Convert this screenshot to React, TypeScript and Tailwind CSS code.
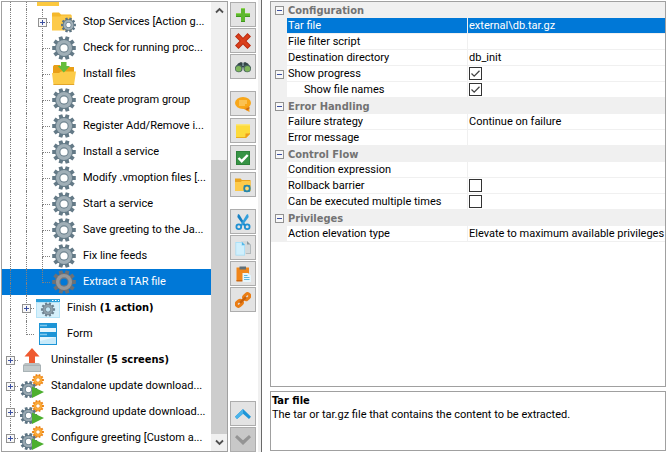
import type { ReactNode } from "react";
import { clsx } from "clsx";

type IconProps = { className?: string };

const TEETH = [18, 54, 90, 126, 162, 198, 234, 270, 306, 342];

function Gear({ cx, cy, scale, dark, light, hole = "#fff" }: {
    cx: number; cy: number; scale: number; dark: string; light: string; hole?: string;
}) {
    return (
        <g transform={`translate(${cx} ${cy}) scale(${scale})`}>
            {TEETH.map((angle) => (
                <path key={angle} d="M-2.1 -7 L-1.9 -11.8 H1.9 L2.1 -7Z" fill={dark} transform={`rotate(${angle})`}/>
            ))}
            <circle r="9" fill={dark}/>
            <circle r="8" fill={light}/>
            <circle r="4.7" fill={dark} fillOpacity="0.8"/>
            <circle r="3.6" fill={hole}/>
        </g>
    );
}

function GearIcon({ selected }: { selected?: boolean }) {
    return (
        <svg viewBox="0 0 24 24" className="size-6 shrink-0">
            {selected
                ? <Gear cx={12} cy={12} scale={1} dark="#6b7177" light="#96989a" hole="#0078d7"/>
                : <Gear cx={12} cy={12} scale={1} dark="#647a87" light="#a0afb7"/>}
        </svg>
    );
}

function FolderIcon() {
    return (
        <svg viewBox="0 0 24 24" className="size-6 shrink-0">
            <path d="M1 4h8l2 2h11v16H1z" fill="#e0a21c"/>
            <path d="M1 9h22v13H1z" fill="#fcc93f"/>
        </svg>
    );
}

function FolderGearIcon() {
    return (
        <svg viewBox="0 0 24 24" className="size-6 shrink-0">
            <path d="M0 3.500a1 1 0 0 1 1-1h6l2 2h9.500a1 1 0 0 1 1 1V20H0z" fill="#f5b82a"/>
            <path d="M0 6.500h8l1.500-1h10V20.500H0z" fill="#fdca49"/>
            <Gear cx={16.500} cy={15} scale={0.63} dark="#5d7483" light="#a3b1b9"/>
        </svg>
    );
}

function InstallIcon() {
    return (
        <svg viewBox="0 0 24 24" className="size-6 shrink-0">
            <path d="M1 4.500 2 3h6l1.500 2H22v10H1z" fill="#e99f17"/>
            <path d="M0 11h7l2-1.500h15L22 23H1.500z" fill="#fccb48"/>
            <path d="M1.500 22h20.700v1H1.600z" fill="#e2a62b"/>
            <path d="M9 0h5.500v4H18l-6.200 6.500L5.700 4H9z" fill="#65bd3c"/>
        </svg>
    );
}

function FinishIcon() {
    return (
        <svg viewBox="0 0 24 24" className="size-6 shrink-0">
            <path d="M0 3h24v19H0z" fill="#b5e3f7"/>
            <path d="M1 7h22v14H1z" fill="#d6f0fb"/>
            <path d="M0 3h24v3H0z" fill="#2ba0dc"/>
            <path d="M16 4.500h1.500M19 4.500h1.500M22 4.500h1" stroke="#fff" strokeWidth="1"/>
            <Gear cx={12} cy={13.500} scale={0.6} dark="#6d8290" light="#8d9fa9" hole="#c5e5f3"/>
        </svg>
    );
}

function FormIcon() {
    return (
        <svg viewBox="0 0 24 24" className="size-6 shrink-0">
            <path d="M3 1h18v22H3z" fill="#1c94d6"/>
            <path d="M4 6h16v4H4zM4 15h16v7H4z" fill="#e6f6fd"/>
            <path d="M4 3.500h7M4 12.500h7" stroke="#7fc9ee" strokeWidth="1.500"/>
            <path d="M4 22v-3l16-4v7z" fill="#c7eafa"/>
        </svg>
    );
}

function UninstallIcon() {
    return (
        <svg viewBox="0 0 24 24" className="size-6 shrink-0">
            <path d="M5 15h14l2 2v7H3v-7z" fill="#b9c0c2"/>
            <path d="M3 17h18v7H3z" fill="#a9b3b6"/>
            <path d="M4 18h16v5H4z" fill="#c2cacc"/>
            <path d="M12 0l7.500 8.500H15V15H9V8.500H4.500z" fill="#ef5a30"/>
        </svg>
    );
}

function LauncherIcon() {
    return (
        <svg viewBox="0 0 24 24" className="size-6 shrink-0">
            <Gear cx={8.500} cy={15.500} scale={0.73} dark="#5d7483" light="#98a8b1"/>
            <Gear cx={18} cy={6} scale={0.5} dark="#ec8314" light="#fbac3a"/>
            <path d="M12 12.500 24 18 12 24z" fill="#4caf2f"/>
        </svg>
    );
}

type Guide = "line" | "tee" | "end";

type TreeRow = {
    label?: string;
    bold?: string;
    icon: ReactNode;
    guides: Guide[];
    expandable?: boolean;
    selected?: boolean;
};

const action = (label: string): TreeRow => ({ label, icon: <GearIcon/>, guides: ["line", "line", "tee"] });

const TREE: TreeRow[] = [
    { icon: <FolderIcon/>, guides: ["line", "line"] },
    { label: "Stop Services [Action g...", icon: <FolderGearIcon/>, guides: ["line", "line", "tee"], expandable: true },
    action("Check for running proc..."),
    { label: "Install files", icon: <InstallIcon/>, guides: ["line", "line", "tee"] },
    action("Create program group"),
    action("Register Add/Remove i..."),
    action("Install a service"),
    action("Modify .vmoption files [..."),
    action("Start a service"),
    action("Save greeting to the Ja..."),
    action("Fix line feeds"),
    { label: "Extract a TAR file", icon: <GearIcon selected/>, guides: ["line", "line", "end"], selected: true },
    { label: "Finish", bold: "(1 action)", icon: <FinishIcon/>, guides: ["line", "tee"], expandable: true },
    { label: "Form", icon: <FormIcon/>, guides: ["line", "end"] },
    { label: "Uninstaller", bold: "(5 screens)", icon: <UninstallIcon/>, guides: ["tee"], expandable: true },
    { label: "Standalone update download...", icon: <LauncherIcon/>, guides: ["tee"], expandable: true },
    { label: "Background update download...", icon: <LauncherIcon/>, guides: ["tee"], expandable: true },
    { label: "Configure greeting [Custom a...", icon: <LauncherIcon/>, guides: ["end"], expandable: true },
];

function Expander({ open }: { open?: boolean }) {
    return (
        <button
            aria-label={open ? "Collapse" : "Expand"}
            className="flex size-[9px] items-center justify-center border border-[#919191] bg-[#f8f8f8]"
        >
            <svg viewBox="0 0 7 7" className="size-[7px]" shapeRendering="crispEdges">
                <path d="M1 3h5v1H1z" fill="#3b4fa0"/>
                {!open && <path d="M3 1h1v5H3z" fill="#3b4fa0"/>}
            </svg>
        </button>
    );
}

function GuideCell({ guide, expandable }: { guide: Guide; expandable: boolean }) {
    const branch = guide !== "line";
    return (
        <div className="relative flex h-full w-4 shrink-0 flex-col pl-2">
            <div className={clsx("h-[14px] border-l border-dotted border-[#808080]", branch && "border-b")}/>
            <div className={clsx("flex-1 border-dotted border-[#808080]", guide !== "end" && "border-l")}/>
            {expandable && (
                <div className="absolute top-[9px] left-1">
                    <Expander/>
                </div>
            )}
        </div>
    );
}

function Tree() {
    return (
        <ul className="flex min-w-0 flex-1 flex-col justify-end overflow-hidden">
            {TREE.map((row, index) => (
                <li
                    key={index}
                    className={clsx("flex h-[26px] shrink-0 items-center", row.selected && "bg-[#0078d7] text-white")}
                >
                    {row.guides.map((guide, i) => (
                        <GuideCell key={i} guide={guide} expandable={!!row.expandable && i === row.guides.length - 1}/>
                    ))}
                    <div className="flex items-center gap-[7px] pl-0.5 whitespace-nowrap">
                        {row.icon}
                        {row.label && (
                            <span>
                                {row.label}
                                {row.bold && <b className="font-['DejaVu_Sans_Condensed','DejaVu_Sans',sans-serif]"> {row.bold}</b>}
                            </span>
                        )}
                    </div>
                </li>
            ))}
        </ul>
    );
}

function ScrollBar() {
    return (
        <div className="flex w-4 shrink-0 flex-col bg-[#f0f0f0]">
            <button aria-label="Scroll up" className="flex h-[17px] items-center justify-center">
                <svg viewBox="0 0 9 7" className="h-[7px] w-[9px]">
                    <path d="M1 5.500 4.500 2 8 5.500" fill="none" stroke="#505050" strokeWidth="1.800"/>
                </svg>
            </button>
            <div className="flex flex-1 flex-col justify-end">
                <div className="h-[66%] bg-[#cdcdcd]"/>
            </div>
            <button aria-label="Scroll down" className="flex h-[17px] items-center justify-center">
                <svg viewBox="0 0 9 7" className="h-[7px] w-[9px]">
                    <path d="M1 1.500 4.500 5 8 1.500" fill="none" stroke="#505050" strokeWidth="1.800"/>
                </svg>
            </button>
        </div>
    );
}

function ToolSvg({ children, className }: IconProps & { children: ReactNode }) {
    return <svg viewBox="0 0 16 16" className={clsx("size-4", className)}>{children}</svg>;
}

const TOOL_GROUPS: { name: string; icon: ReactNode; disabled?: boolean }[][] = [
    [
        {
            name: "Add", icon: (
                <ToolSvg>
                    <path d="M6 1h4v5h5v4h-5v5H6v-5H1V6h5z" fill="#5eb82e"/>
                    <path d="M6 1h4v1H6zM1 6h5v1H1zM10 6h5v1h-5z" fill="#8dd455"/>
                    <path d="M6 14h4v1H6zM1 9h5v1H1zM10 9h5v1h-5z" fill="#3f971f"/>
                </ToolSvg>
            ),
        },
        {
            name: "Delete", icon: (
                <ToolSvg>
                    <path d="M3.500 0 8 4.800 12.500 0 16 3.500 11.500 8l4.500 4.500-3.500 3.500L8 11.500 3.500 16 0 12.500 4.500 8 0 3.500z" fill="#b9290e"/>
                    <path d="M3.500 1.300 8 6l4.500-4.700 2.200 2.200L10.200 8l4.500 4.500-2.200 2.200L8 10.200l-4.500 4.500-2.200-2.200L5.800 8 1.300 3.500z" fill="#d93f1b"/>
                </ToolSvg>
            ),
        },
        {
            name: "Find", icon: (
                <ToolSvg>
                    <path d="M0 9 3 4.500 6 3l2 1 2-1 3 1.500L16 9l-6 1-2-2-2 2z" fill="#354648"/>
                    <circle cx="3.800" cy="9.500" r="3.800" fill="#48655d"/>
                    <circle cx="12.200" cy="9.500" r="3.800" fill="#48655d"/>
                    <circle cx="3.600" cy="9.800" r="2.800" fill="#7fb65a"/>
                    <circle cx="12.400" cy="9.800" r="2.800" fill="#7fb65a"/>
                    <path d="M7 4h2v3H7z" fill="#6f868a"/>
                </ToolSvg>
            ),
        },
    ],
    [
        {
            name: "Comment", icon: (
                <ToolSvg>
                    <ellipse cx="8" cy="7" rx="8" ry="6" fill="#f8a71a"/>
                    <path d="M8 12.500 14 9.500 14.500 16z" fill="#f39a18"/>
                    <path d="M4 5h8M4 7h8M4 9h6" stroke="#fddc8b" strokeWidth="1"/>
                    <path d="m10.500 13 4-2v1.500L12 14.500z" fill="#cf6a10"/>
                </ToolSvg>
            ),
        },
        {
            name: "Note", icon: (
                <ToolSvg>
                    <path d="M1 1h14v10l-4 4H1z" fill="#fddb3b"/>
                    <path d="M1 1h14v1.500H1z" fill="#fbe67a"/>
                    <path d="M15 10v1l-4 4H1v-1h9z" fill="#e9ad20"/>
                    <path d="M15 10.500 10.500 15v-4.500z" fill="#f09a1d"/>
                </ToolSvg>
            ),
        },
        {
            name: "Enable", icon: (
                <ToolSvg>
                    <path d="M1 1h14v14H1z" fill="#2c8139"/>
                    <path d="M2 2h12v12H2z" fill="#369345"/>
                    <path d="m3.500 8 3.200 3.200 6-6.200" fill="none" stroke="#fff" strokeWidth="2.400"/>
                </ToolSvg>
            ),
        },
        {
            name: "Add group", icon: (
                <ToolSvg>
                    <path d="M0 1.500h5.500L7 3h8.500v11H0z" fill="#e9a41f"/>
                    <path d="M0 5h5.500L7 4h8.500v10H0z" fill="#fdca49"/>
                    <circle cx="12" cy="11.500" r="2.800" fill="#fdd977" stroke="#2787a9" strokeWidth="1.800"/>
                    <path d="m9 8.500 1 1M15 8.500l-1 1M9 14.500l1-1M15 14.500l-1-1" stroke="#2787a9" strokeWidth="1.500"/>
                </ToolSvg>
            ),
        },
    ],
    [
        {
            name: "Cut", icon: (
                <ToolSvg>
                    <path d="m3 0 1.500.8 6.500 11-1.500 1L2.300 3z" fill="#1681c4"/>
                    <path d="m13 0-1.500.8-6.500 11 1.500 1L13.700 3z" fill="#329fdc"/>
                    <circle cx="3.800" cy="12.700" r="2.400" fill="none" stroke="#1f90d2" strokeWidth="1.800"/>
                    <circle cx="12.200" cy="12.700" r="2.400" fill="none" stroke="#1f90d2" strokeWidth="1.800"/>
                </ToolSvg>
            ),
        },
        {
            name: "Copy", icon: (
                <ToolSvg>
                    <path d="M6 1h6l3.500 3.500V14H6z" fill="#d4d9db"/>
                    <path d="M12 1v3.500h3.500z" fill="#8d989c"/>
                    <path d="M15 4.500h.8V14H11v-.8h4z" fill="#a8b0b3"/>
                    <path d="M.500 2H7l3 3v10.500H.500z" fill="#9edcf8"/>
                    <path d="M1.200 2.700h5.300v3h2.800v9H1.200z" fill="#d0effc"/>
                    <path d="M7 2v3h3z" fill="#53b7e8"/>
                </ToolSvg>
            ),
        },
        {
            name: "Paste", icon: (
                <ToolSvg>
                    <path d="M1.500 1.500h12.500V15H1.500z" fill="#f0861a"/>
                    <path d="M1.500 14H8v1.500H1.500z" fill="#cc650d"/>
                    <path d="M4.500 .500h6.500V3.500H4.500z" fill="#5f6f78"/>
                    <path d="M7.500 7H13l3 2.500V16H7.500z" fill="#e7f6fd"/>
                    <path d="M9 9.500h3.500M9 11.500h5.500M9 13.500h5.500" stroke="#5fb6de" strokeWidth="1"/>
                </ToolSvg>
            ),
        },
        {
            name: "Link", icon: (
                <ToolSvg>
                    <g fill="none" stroke="#ea7d14" strokeWidth="3">
                        <rect x="-8.300" y="-2.200" width="6.600" height="4.400" rx="2.200" transform="translate(8 8) rotate(-42)"/>
                        <rect x="1.700" y="-2.200" width="6.600" height="4.400" rx="2.200" transform="translate(8 8) rotate(-42)"/>
                    </g>
                    <path d="m5.500 10.300 5-4.600" stroke="#c9620c" strokeWidth="2.500" strokeLinecap="round"/>
                </ToolSvg>
            ),
        },
    ],
];

const MOVE_TOOLS = [
    {
        name: "Move up", icon: (
            <ToolSvg>
                <path d="M0 10.800 8 3l8 7.800-2 2.200-6-5.300L2 13z" fill="#1e96d8"/>
                <path d="M0 10.800 8 3v4.700L2 13z" fill="#4cb4e9"/>
            </ToolSvg>
        ),
    },
    {
        name: "Move down", disabled: true, icon: (
            <ToolSvg>
                <path d="M0 5.200 8 13l8-7.800L14 3 8 8.300 2 3z" fill="#949494"/>
            </ToolSvg>
        ),
    },
];

function ToolButton({ name, icon, disabled }: { name: string; icon: ReactNode; disabled?: boolean }) {
    return (
        <button
            aria-label={name}
            disabled={disabled}
            className={clsx(
                "flex h-[25px] w-[26px] items-center justify-center border border-[#adadad]",
                disabled ? "bg-[#c8c8c8]" : "bg-[#e3e3e3]",
            )}
        >
            {icon}
        </button>
    );
}

function ToolBar() {
    return (
        <div className="flex shrink-0 flex-col gap-3 px-0.5 pt-0.5">
            {TOOL_GROUPS.map((group, i) => (
                <div key={i} className={clsx("flex flex-col", i === 1 ? "gap-0.5" : "gap-px")}>
                    {group.map((tool) => <ToolButton key={tool.name} {...tool}/>)}
                </div>
            ))}
            <div className="mt-auto flex flex-col gap-px">
                {MOVE_TOOLS.map((tool) => <ToolButton key={tool.name} {...tool}/>)}
            </div>
        </div>
    );
}

type Property = {
    name: string;
    value?: string;
    checked?: boolean;
    open?: boolean;
    nested?: boolean;
    selected?: boolean;
};

const SECTIONS: { title: string; properties: Property[] }[] = [
    {
        title: "Configuration",
        properties: [
            { name: "Tar file", value: "external\\db.tar.gz", selected: true },
            { name: "File filter script" },
            { name: "Destination directory", value: "db_init" },
            { name: "Show progress", checked: true, open: true },
            { name: "Show file names", checked: true, nested: true },
        ],
    },
    {
        title: "Error Handling",
        properties: [
            { name: "Failure strategy", value: "Continue on failure" },
            { name: "Error message" },
        ],
    },
    {
        title: "Control Flow",
        properties: [
            { name: "Condition expression" },
            { name: "Rollback barrier", checked: false },
            { name: "Can be executed multiple times", checked: false },
        ],
    },
    {
        title: "Privileges",
        properties: [
            { name: "Action elevation type", value: "Elevate to maximum available privileges" },
        ],
    },
];

function CheckBox({ id, checked }: { id: string; checked: boolean }) {
    return (
        <span className="relative block size-[13px]">
            <input
                id={id}
                type="checkbox"
                defaultChecked={checked}
                className="peer block size-[13px] appearance-none border border-[#333] bg-white"
            />
            <svg
                viewBox="0 0 13 13"
                className="pointer-events-none absolute inset-0 hidden size-[13px] peer-checked:block"
            >
                <path d="m2.500 6.500 2.700 2.700 5.300-5.400" fill="none" stroke="#444" strokeWidth="1.300"/>
            </svg>
        </span>
    );
}

function PropertyRow({ property }: { property: Property }) {
    const { name, value, checked, open, nested, selected } = property;
    const id = name.toLowerCase().replaceAll(" ", "-");
    return (
        <tr className={clsx("h-4", selected && "text-white")}>
            <td className="bg-[#f0f0f0] p-0 pl-1 align-middle">{open && <Expander open/>}</td>
            <td className={clsx(
                "border-r border-b border-[#f0f0f0] p-0 align-middle",
                nested ? "pl-[17px]" : "pl-px",
                selected && "bg-[#0078d7]",
            )}>
                {checked === undefined ? name : <label htmlFor={id} className="block">{name}</label>}
            </td>
            <td className={clsx("border-b border-[#f0f0f0] p-0 pl-px align-middle", selected && "bg-[#0078d7]")}>
                {checked === undefined ? value : <CheckBox id={id} checked={checked}/>}
            </td>
        </tr>
    );
}

function PropertyGrid() {
    return (
        <div className="flex-1 overflow-hidden border border-[#a0a0a0] bg-white">
            <table className="w-full table-fixed border-separate border-spacing-0 leading-[15px] whitespace-nowrap">
                <colgroup>
                    <col className="w-4"/>
                    <col className="w-[181px]"/>
                    <col/>
                </colgroup>
                {SECTIONS.map((section) => (
                    <tbody key={section.title}>
                        <tr className="h-4 bg-[#f0f0f0]">
                            <td className="p-0 pl-1 align-middle"><Expander open/></td>
                            <th
                                colSpan={2}
                                className="p-0 pl-px text-left align-middle font-['DejaVu_Sans_Condensed','DejaVu_Sans',sans-serif] font-bold text-[#737373]"
                            >
                                {section.title}
                            </th>
                        </tr>
                        {section.properties.map((property) => (
                            <PropertyRow key={property.name} property={property}/>
                        ))}
                    </tbody>
                ))}
            </table>
        </div>
    );
}

export default function App() {
    return (
        <div className="flex h-screen overflow-hidden bg-white pl-px font-[Roboto,sans-serif] text-[11px] leading-[14px] text-black">
            <div className="flex w-1/3 min-w-[227px] shrink-0 pt-px">
                <div className="flex min-w-0 flex-1 border border-[#a0a0a0]">
                    <Tree/>
                    <ScrollBar/>
                </div>
            </div>
            <ToolBar/>
            <div className="w-1 shrink-0 border-r border-[#696969] bg-[#f0f0f0]"/>
            <div className="flex min-w-0 flex-1 flex-col gap-1 pt-px pr-px pb-px pl-2">
                <PropertyGrid/>
                <div className="h-[60px] shrink-0 border border-[#a0a0a0] px-px pt-0.5">
                    <h2 className="font-['DejaVu_Sans_Condensed','DejaVu_Sans',sans-serif] font-bold">Tar file</h2>
                    <p>The tar or tar.gz file that contains the content to be extracted.</p>
                </div>
            </div>
        </div>
    );
}
